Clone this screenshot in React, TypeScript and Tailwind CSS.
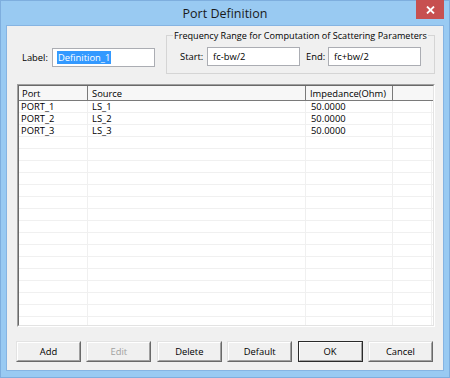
import React from "react";

const rows = [
  { port: "PORT_1", source: "LS_1", imp: "50.0000" },
  { port: "PORT_2", source: "LS_2", imp: "50.0000" },
  { port: "PORT_3", source: "LS_3", imp: "50.0000" },
];

function Btn({ label, disabled, def }: { label: string; disabled?: boolean; def?: boolean }) {
  return (
    <div
      className={
        "w-[65px] h-[21px] border " +
        (def
          ? "border-[#2b2b2b]"
          : "border-t-[#e3e3e3] border-l-[#e3e3e3] border-r-[#696969] border-b-[#696969]")
      }
    >
      <div
        className={
          "w-full h-full border bg-[#f0f0f0] flex items-center justify-center border-t-[#ffffff] border-l-[#ffffff] border-r-[#a0a0a0] border-b-[#a0a0a0]" +
          (disabled ? " text-[#a0a0a0]" : " text-black")
        }
      >
        {label}
      </div>
    </div>
  );
}

export default function App() {
  const all = [...rows, ...Array.from({ length: 17 }, () => ({ port: "", source: "", imp: "" }))];
  return (
    <div
      className="w-[450px] h-[378px] bg-[#99caf2] border border-[#7eaede] flex flex-col px-[5px] pb-[6px] text-[9.4px] text-black leading-[12px]"
      style={{ fontFamily: '"Open Sans", "Noto Sans", sans-serif' }}
    >
      {/* title bar */}
      <div className="relative h-[24px] flex items-center justify-center">
        <span className="text-[12.5px] leading-[16px] text-[#1a1a1a] mt-[2px]">Port Definition</span>
        <div className="absolute top-[-1px] right-0 w-[28px] h-[19px] bg-[#c75050] flex items-center justify-center">
          <svg width="9" height="8" viewBox="0 0 9 8">
            <path d="M1 0.5 L8 7.5 M8 0.5 L1 7.5" stroke="#ffffff" strokeWidth="1.8" />
          </svg>
        </div>
      </div>

      {/* client */}
      <div className="flex-1 border border-[#86b4e2] bg-[#f0f0f0] flex flex-col pl-[9px]">
        {/* top row */}
        <div className="h-[58px] flex items-start">
          <div className="mt-[22px] flex items-center">
            <span className="w-[36px] pl-[6px]">Label:</span>
            <div className="w-[103px] h-[19px] bg-white border border-[#abadb3] flex items-center pl-[4px]">
              <span className="bg-[#3399ff] text-white px-[1px] leading-[13px]">Definition_1</span>
            </div>
          </div>
          <fieldset className="ml-[11px] mt-[3px] w-[266px] h-[45px] border border-[#d5d5d5] px-[6px]">
            <legend className="px-[1px] leading-[13px] whitespace-nowrap text-[9.1px]">
              Frequency Range for Computation of Scattering Parameters
            </legend>
            <div className="flex items-center mt-[5px] ml-[7px]">
              <span className="w-[27px]">Start:</span>
              <div className="w-[93px] h-[19px] bg-white border border-[#abadb3] flex items-center pl-[5px]">
                fc-bw/2
              </div>
              <span className="w-[22px] ml-[6px]">End:</span>
              <div className="w-[93px] h-[19px] bg-white border border-[#abadb3] flex items-center pl-[5px]">
                fc+bw/2
              </div>
            </div>
          </fieldset>
        </div>

        {/* table */}
        <div className="ml-[1px] w-[418px] h-[243px] border border-t-[#a0a0a0] border-l-[#a0a0a0] border-r-[#ffffff] border-b-[#ffffff]">
          <div className="w-full h-full border border-t-[#696969] border-l-[#696969] border-r-[#e3e3e3] border-b-[#e3e3e3] bg-white overflow-hidden leading-[11px]">
            <div className="flex h-[15px] bg-[#f7f7f7] border-b border-[#7a7a7a]">
              <div className="w-[69px] pl-[3px] border-r border-[#7a7a7a] flex items-center">Port</div>
              <div className="w-[218px] pl-[4px] border-r border-[#7a7a7a] flex items-center">Source</div>
              <div className="w-[87px] pl-[4px] border-r border-[#7a7a7a] flex items-center">Impedance(Ohm)</div>
              <div className="w-[39px]"></div>
            </div>
            {all.map((r, i) => (
              <div key={i} className="flex h-[12px] border-b border-[#f0f0f0]">
                <div className="w-[69px] pl-[2px] border-r border-[#f0f0f0] flex items-center">{r.port}</div>
                <div className="w-[218px] pl-[4px] border-r border-[#f0f0f0] flex items-center">{r.source}</div>
                <div className="w-[87px] pl-[5px] border-r border-[#f0f0f0] flex items-center">{r.imp}</div>
                <div className="w-[39px] border-r border-[#f0f0f0]"></div>
              </div>
            ))}
          </div>
        </div>

        {/* buttons */}
        <div className="mt-[14px] w-[417px] flex justify-between">
          <Btn label="Add" />
          <Btn label="Edit" disabled />
          <Btn label="Delete" />
          <Btn label="Default" />
          <Btn label="OK" def />
          <Btn label="Cancel" />
        </div>
      </div>
    </div>
  );
}
